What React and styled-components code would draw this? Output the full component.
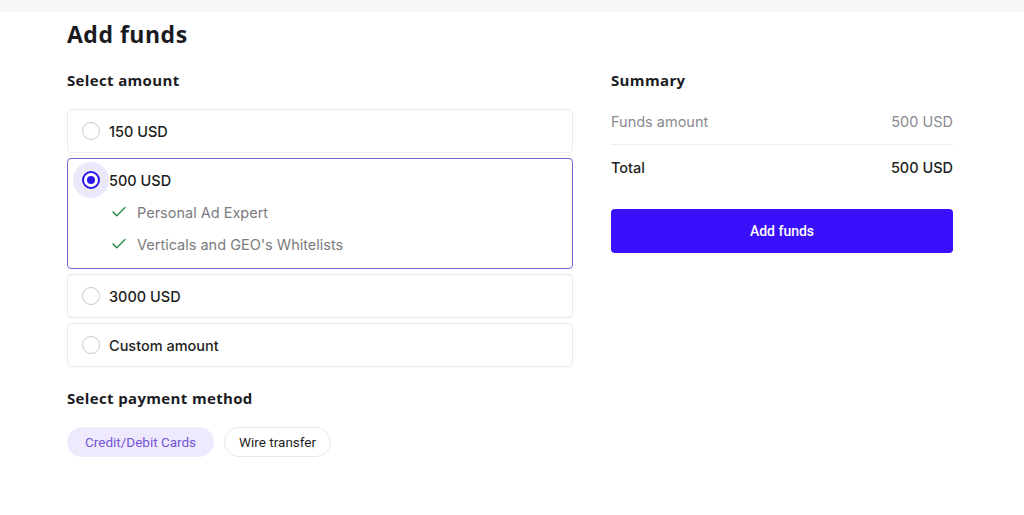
import styled, { createGlobalStyle } from 'styled-components'
import { Check } from 'lucide-react'

const GlobalStyle = createGlobalStyle`
  html, body {
    margin: 0;
    background: #fff;
    font-family: Inter, Roboto, sans-serif;
    color: #1b1b1f;
  }
`

const amounts = [
  { label: '150 USD' },
  { label: '500 USD', selected: true, features: ['Personal Ad Expert', "Verticals and GEO's Whitelists"] },
  { label: '3000 USD' },
  { label: 'Custom amount' }
]

const methods = [
  { label: 'Credit/Debit Cards', active: true },
  { label: 'Wire transfer' }
]

export default function App() {
  return (
    <>
      <GlobalStyle />
      <TopStrip />
      <Page>
        <Title>Add funds</Title>
        <Columns>
          <LeftCol>
            <SectionTitle>Select amount</SectionTitle>
            <CardList>
              {amounts.map(({ label, selected, features }) => (
                <Card key={label} $selected={selected}>
                  <CardHeader>
                    <Radio $selected={selected} />
                    <span>{label}</span>
                  </CardHeader>
                  {features && (
                    <FeatureList>
                      {features.map((f) => (
                        <Feature key={f}>
                          <Check size={18} strokeWidth={2} />
                          {f}
                        </Feature>
                      ))}
                    </FeatureList>
                  )}
                </Card>
              ))}
            </CardList>
            <SectionTitle $top>Select payment method</SectionTitle>
            <Pills>
              {methods.map(({ label, active }) => (
                <Pill key={label} $active={active}>{label}</Pill>
              ))}
            </Pills>
          </LeftCol>
          <RightCol>
            <SectionTitle>Summary</SectionTitle>
            <SummaryRow $muted>
              <span>Funds amount</span>
              <span>500 USD</span>
            </SummaryRow>
            <SummaryRow>
              <span>Total</span>
              <span>500 USD</span>
            </SummaryRow>
            <AddButton>Add funds</AddButton>
          </RightCol>
        </Columns>
      </Page>
    </>
  )
}

//#region STYLED COMPONENTS
const TopStrip = styled.div`
  height: 12px;
  background: #f7f8fa;
`

const Page = styled.div`
  width: 886px;
  padding: 0 0 0 67px;
`

const Title = styled.h1`
  margin: 8px 0 0;
  font-family: 'Open Sans', sans-serif;
  font-weight: 700;
  font-size: 23px;
  line-height: 28px;
  letter-spacing: 0.5px;
`

const Columns = styled.div`
  display: grid;
  grid-template-columns: 506px 342px;
  column-gap: 38px;
  margin-top: 20px;
`

const LeftCol = styled.div`
  display: flex;
  flex-direction: column;
`

const RightCol = styled.div`
  display: flex;
  flex-direction: column;
`

const SectionTitle = styled.h2`
  margin: ${(p) => (p.$top ? '19px' : '0')} 0 0;
  font-family: 'Open Sans', sans-serif;
  font-weight: 700;
  font-size: 15px;
  line-height: 24px;
  letter-spacing: 0.35px;
`

const CardList = styled.div`
  display: flex;
  flex-direction: column;
  gap: 5px;
  margin-top: 17px;
`

const Card = styled.div`
  border: ${(p) => (p.$selected ? '1.5px solid #7466cf' : '1px solid #ebebef')};
  border-radius: 4px;
  padding: 0 14px;
  background: #fff;
`

const CardHeader = styled.div`
  display: flex;
  align-items: center;
  gap: 9px;
  height: 42px;
  font-size: 14.5px;
  font-weight: 500;
  color: #1f1f23;
`

const Radio = styled.span`
  position: relative;
  box-sizing: border-box;
  width: 18px;
  height: 18px;
  border-radius: 50%;
  flex-shrink: 0;
  border: ${(p) => (p.$selected ? '2px solid #2a16e6' : '1.5px solid #c9c9cf')};
  box-shadow: ${(p) => (p.$selected ? '0 0 0 9px #ebe8fb' : 'none')};
  background: #fff;
  &::after {
    content: '';
    display: ${(p) => (p.$selected ? 'block' : 'none')};
    position: absolute;
    left: 50%;
    top: 50%;
    width: 8px;
    height: 8px;
    margin: -4px 0 0 -4px;
    border-radius: 50%;
    background: #2a16e6;
  }
`

const FeatureList = styled.div`
  display: flex;
  flex-direction: column;
  margin-top: -5px;
  padding: 0 0 8px 28px;
`

const Feature = styled.div`
  display: flex;
  align-items: center;
  gap: 9px;
  height: 32px;
  font-size: 14.5px;
  color: #7b7b80;
  svg {
    color: #2f8f4e;
  }
`

const Pills = styled.div`
  display: flex;
  gap: 10px;
  margin-top: 17px;
`

const Pill = styled.button`
  height: 30px;
  padding: 0 ${(p) => (p.$active ? '17px' : '14px')};
  border-radius: 15px;
  font-family: Roboto, sans-serif;
  font-size: 13.5px;
  cursor: pointer;
  background: ${(p) => (p.$active ? '#eee9fc' : '#fff')};
  color: ${(p) => (p.$active ? '#7456d6' : '#1f1f23')};
  border: ${(p) => (p.$active ? '1px solid #eee9fc' : '1px solid #e8e8ec')};
`

const SummaryRow = styled.div`
  display: flex;
  justify-content: space-between;
  align-items: center;
  height: 45px;
  font-size: 14.5px;
  font-weight: ${(p) => (p.$muted ? 400 : 500)};
  color: ${(p) => (p.$muted ? '#8a8a8f' : '#1f1f23')};
  border-bottom: ${(p) => (p.$muted ? '1px solid #eeeef1' : 'none')};
  margin-top: ${(p) => (p.$muted ? '7px' : '0')};
`

const AddButton = styled.button`
  margin-top: 19px;
  height: 44px;
  border: none;
  border-radius: 4px;
  background: #3a0ffc;
  color: #fff;
  font-family: Roboto, sans-serif;
  font-size: 14px;
  font-weight: 500;
  cursor: pointer;
`
//#endregion
